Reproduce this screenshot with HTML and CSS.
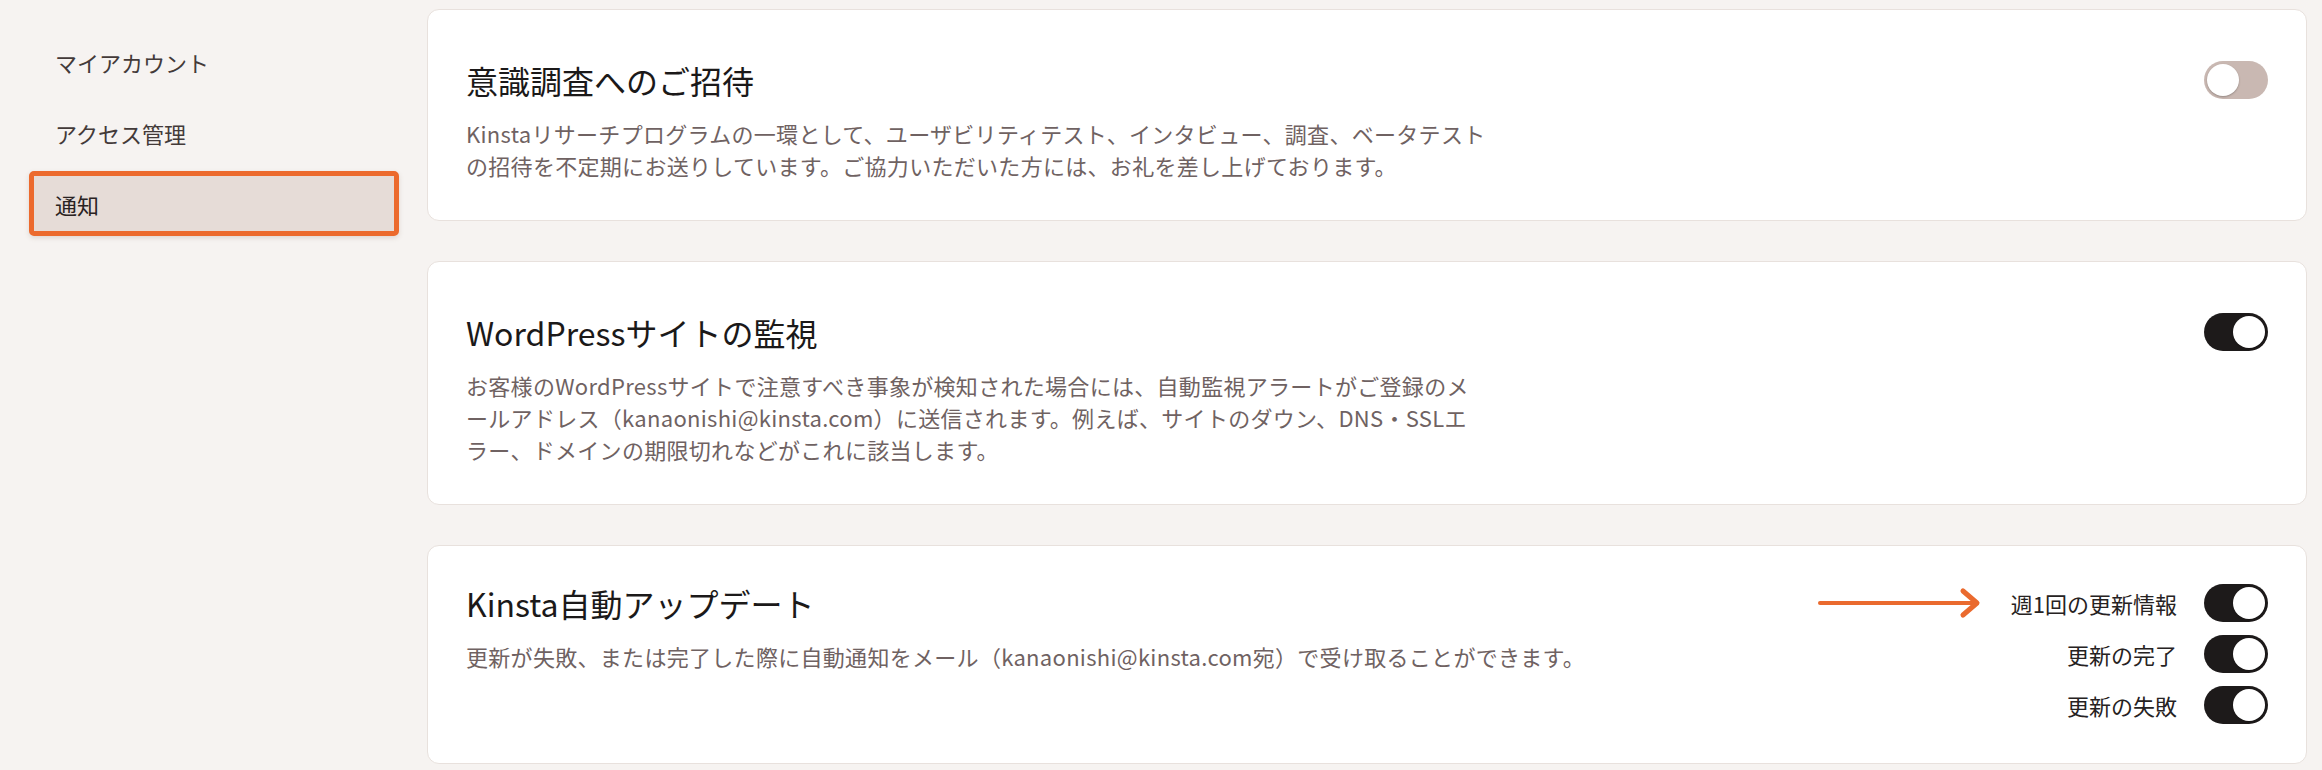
FILE: index.html
```html
<!DOCTYPE html>
<html lang="ja">
<head>
<meta charset="utf-8">
<title>通知</title>
<link rel="stylesheet" href="styles.css">
</head>
<body>
<div class="page">
  <aside class="sidebar">
    <nav class="nav">
      <a class="nav-item">マイアカウント</a>
      <a class="nav-item">アクセス管理</a>
      <a class="nav-item nav-item--active">通知</a>
    </nav>
  </aside>
  <main class="main">
    <section class="card">
      <div class="card-body">
        <h2 class="card-title">意識調査へのご招待</h2>
        <p class="card-desc">Kinstaリサーチプログラムの一環として、ユーザビリティテスト、インタビュー、調査、ベータテスト<br>の招待を不定期にお送りしています。ご協力いただいた方には、お礼を差し上げております。</p>
      </div>
      <div class="card-controls">
        <span class="toggle toggle--off"><span class="knob"></span></span>
      </div>
    </section>
    <section class="card">
      <div class="card-body">
        <h2 class="card-title">WordPressサイトの監視</h2>
        <p class="card-desc">お客様のWordPressサイトで注意すべき事象が検知された場合には、自動監視アラートがご登録のメ<br>ールアドレス（kanaonishi@kinsta.com）に送信されます。例えば、サイトのダウン、DNS・SSLエ<br>ラー、ドメインの期限切れなどがこれに該当します。</p>
      </div>
      <div class="card-controls">
        <span class="toggle"><span class="knob"></span></span>
      </div>
    </section>
    <section class="card card--multi">
      <div class="card-body">
        <h2 class="card-title">Kinsta自動アップデート</h2>
        <p class="card-desc">更新が失敗、または完了した際に自動通知をメール（kanaonishi@kinsta.com宛）で受け取ることができます。</p>
      </div>
      <div class="card-controls card-controls--list">
        <div class="toggle-row">
          <svg class="arrow" width="164" height="34" viewBox="0 0 164 34" aria-hidden="true">
            <line x1="3" y1="17" x2="156" y2="17" stroke="#ea6a2e" stroke-width="4" stroke-linecap="round"/>
            <polyline points="146,5 160,17 146,29" fill="none" stroke="#ea6a2e" stroke-width="5" stroke-linecap="round" stroke-linejoin="round"/>
          </svg>
          <span class="toggle-label">週1回の更新情報</span>
          <span class="toggle"><span class="knob"></span></span>
        </div>
        <div class="toggle-row">
          <span class="toggle-label">更新の完了</span>
          <span class="toggle"><span class="knob"></span></span>
        </div>
        <div class="toggle-row">
          <span class="toggle-label">更新の失敗</span>
          <span class="toggle"><span class="knob"></span></span>
        </div>
      </div>
    </section>
  </main>
</div>
</body>
</html>
```
FILE: styles.css
```css
* { box-sizing: border-box; }

html, body {
  margin: 0;
  padding: 0;
  background: #f6f3f1;
}

body {
  font-family: "Noto Sans CJK JP", "Noto Sans", "Liberation Sans", sans-serif;
  color: #1c1a1a;
}

.page {
  display: flex;
  align-items: flex-start;
  min-height: 770px;
}

.sidebar {
  flex: 0 0 427px;
  padding: 29px 28px 0 29px;
}

.nav {
  display: flex;
  flex-direction: column;
  gap: 6px;
}

.nav-item {
  display: flex;
  align-items: center;
  height: 65px;
  padding-left: 21px;
  border: 5px solid transparent;
  border-radius: 5px;
  font-size: 22px;
  color: #433a39;
  text-decoration: none;
}

.nav-item--active {
  background: #e6dcd7;
  border-color: #ec6a2d;
  color: #2a2322;
  box-shadow: 0 2px 5px rgba(120, 90, 70, 0.18);
}

.main {
  flex: 1;
  display: flex;
  flex-direction: column;
  gap: 40px;
  padding: 9px 15px 0 0;
}

.card {
  display: flex;
  justify-content: space-between;
  align-items: flex-start;
  background: #ffffff;
  border: 1px solid #e8e1dd;
  border-radius: 12px;
  padding: 51px 38px 39px 38px;
}

.card--multi {
  padding-top: 38px;
  padding-bottom: 39px;
}

.card-body {
  flex: 1;
}

.card-title {
  margin: 0;
  font-size: 32px;
  line-height: 38px;
  font-weight: 400;
  color: #1b1919;
}

.card-desc {
  margin: 18px 0 0 0;
  font-size: 22px;
  line-height: 32px;
  letter-spacing: 0.3px;
  color: #6f6262;
  white-space: nowrap;
}

.card-controls {
  display: flex;
  flex-direction: column;
  align-items: flex-end;
}

.card-controls--list {
  gap: 13px;
}

.toggle-row {
  display: flex;
  align-items: center;
  justify-content: flex-end;
  height: 38px;
}

.arrow {
  display: block;
  margin-right: 30px;
}

.toggle-label {
  font-size: 22px;
  color: #262222;
  margin-right: 27px;
}

.toggle {
  position: relative;
  display: inline-block;
  width: 64px;
  height: 38px;
  border-radius: 19px;
  background: #1d1a1a;
}

.knob {
  position: absolute;
  top: 3px;
  right: 3px;
  width: 32px;
  height: 32px;
  border-radius: 50%;
  background: #ffffff;
  box-shadow: 0 1px 2px rgba(0, 0, 0, 0.25);
}

.toggle--off {
  background: #c9b8b2;
}

.toggle--off .knob {
  right: auto;
  left: 3px;
}
```
